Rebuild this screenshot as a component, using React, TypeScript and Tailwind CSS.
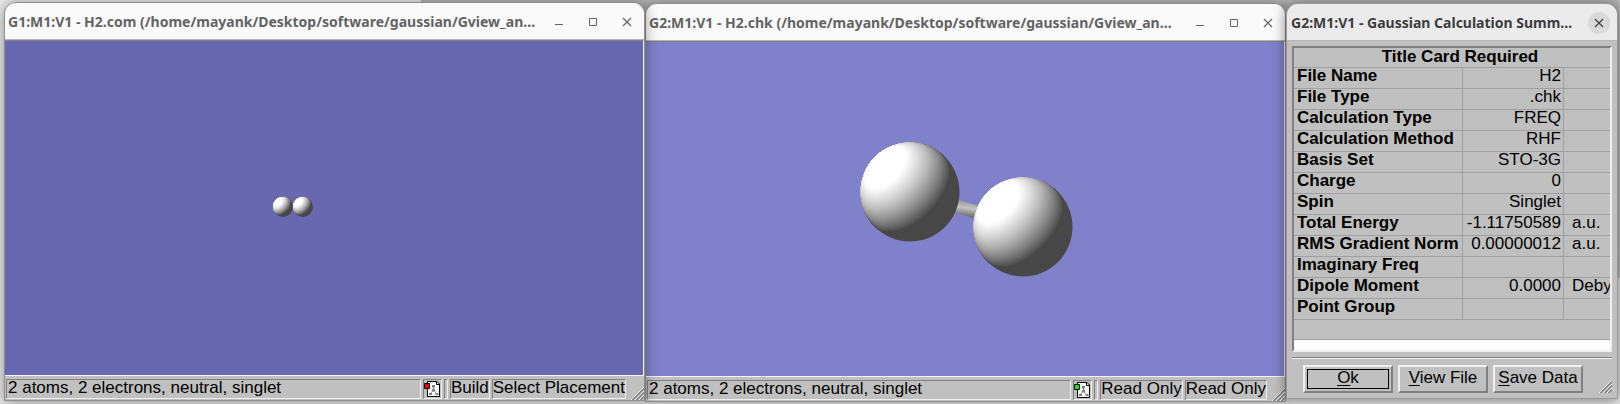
import type { ReactNode } from 'react'

const LIGHT = { z: 0.577, flat: 0.8165 }

function litRegion(c: number) {
  const s = Math.sqrt(1 - c * c)
  const rx = s * LIGHT.z
  const cx = c * LIGHT.flat
  const u = c / LIGHT.flat
  if (u >= 1) {
    return `M${cx - rx} 0A${rx} ${s} 0 1 1 ${cx + rx} 0A${rx} ${s} 0 1 1 ${cx - rx} 0Z`
  }
  const v = Math.sqrt(1 - u * u)
  const large = cx < u ? 1 : 0
  return `M${u} ${v}A1 1 0 0 0 ${u} ${-v}A${rx} ${s} 0 ${large} 0 ${u} ${v}Z`
}

const LEVELS = Array.from({ length: 70 }, (_, i) => {
  const c = i / 70
  const v = Math.min(255, Math.round(71 + 205 * c + 15 * Math.pow(c, 4)))
  return { d: litRegion(c), fill: `rgb(${v},${v},${v})` }
})

function Atom({ x, y, r }: { x: number; y: number; r: number }) {
  return (
    <g transform={`translate(${x} ${y}) rotate(-135) scale(${r})`}>
      <circle r={1} fill="#474747" />
      {LEVELS.map((l, i) => (
        <path key={i} d={l.d} fill={l.fill} />
      ))}
    </g>
  )
}

function CloseGlyph() {
  return (
    <svg viewBox="0 0 10 10" className="size-[10px]" fill="none" stroke="currentColor" strokeWidth="1.2">
      <path d="M1 1 9 9M9 1 1 9" />
    </svg>
  )
}

function TitleBar({ title }: { title: string }) {
  return (
    <header className="flex h-[37px] shrink-0 items-center border-b border-b-[#b4b4b4] bg-[#fafafa] pt-[2px] pl-[3px] text-[#636363]">
      <h2 className="min-w-0 flex-1 truncate font-['Noto_Sans',sans-serif] text-[14px] leading-6 font-bold">{title}</h2>
      <button aria-label="Minimize" className="flex h-6 w-[34px] shrink-0 items-center justify-center">
        <svg viewBox="0 0 10 10" className="size-[10px]" fill="currentColor">
          <path d="M1 7H9V8H1Z" />
        </svg>
      </button>
      <button aria-label="Maximize" className="flex h-6 w-[34px] shrink-0 items-center justify-center">
        <svg viewBox="0 0 10 10" className="size-[10px]" fill="none" stroke="currentColor">
          <path d="M1.5 1.5H8.5V8.5H1.5Z" />
        </svg>
      </button>
      <button aria-label="Close" className="flex h-6 w-[34px] shrink-0 items-center justify-center">
        <CloseGlyph />
      </button>
    </header>
  )
}

function Grip() {
  return (
    <svg viewBox="0 0 13 13" className="size-[13px] shrink-0" fill="none">
      <path d="M0 13 13 0M4 13 13 4M8 13 13 8" stroke="#f4f4f4" />
      <path d="M1.5 13 13 1.5M5.5 13 13 5.5M9.5 13 13 9.5" stroke="#7c7c7c" strokeWidth="1.4" />
    </svg>
  )
}

function Panel({ children, className = '' }: { children?: ReactNode; className?: string }) {
  return (
    <div
      className={`h-5 shrink-0 border border-t-[#808080] border-r-[#f0f0f0] border-b-[#f0f0f0] border-l-[#808080] whitespace-nowrap ${className}`}
    >
      {children}
    </div>
  )
}

function FileIcon({ color }: { color: string }) {
  return (
    <svg viewBox="0 0 17 18" className="h-[18px] w-[17px]" fill="none">
      <path d="M3.5 1.5H13L15.5 4V16.5H3.5Z" fill="#fff" stroke="#000" />
      <path d="M12.5 1.5V4.5H15.5" stroke="#000" />
      <path d="M9.5 6V10M9.5 10 6 14M9.5 10 13 14" stroke="#8c8c8c" />
      <path d="M8 5H11V7.5H8ZM8 9H11V11.5H8ZM5 13H8V15H5ZM11.5 13H14.5V15H11.5Z" fill="#808080" />
      <path d="M0.5 3.5H5.5V8.5H0.5Z" fill={color} stroke="#000" />
    </svg>
  )
}

function ViewWindow(props: {
  title: string
  modes: string[]
  iconColor: string
  className: string
  viewClass: string
  children: ReactNode
}) {
  return (
    <section
      className={`flex flex-col overflow-hidden rounded-t-xl border border-[#8e8e8e] bg-[#c0c0c0] shadow-[0_1px_14px_rgba(0,0,0,0.4)] ${props.className}`}
    >
      <TitleBar title={props.title} />
      <svg
        viewBox="0 0 638 334"
        role="img"
        aria-label="Hydrogen molecule"
        className={`block min-h-0 w-full flex-1 basis-0 border-t border-r border-t-[#808080] border-r-[#f0f0f0] ${props.viewClass}`}
      >
        {props.children}
      </svg>
      <footer className="flex h-[25px] shrink-0 items-end gap-[2px] border-t border-t-[#f4f4f4] pl-px text-[17px] leading-[15px]">
        <div className="flex min-w-0 flex-1 items-end gap-[2px] pb-px">
          <Panel className="min-w-0 flex-1 overflow-hidden pl-px">2 atoms, 2 electrons, neutral, singlet</Panel>
          <Panel className="w-[19px]">
            <FileIcon color={props.iconColor} />
          </Panel>
          <Panel className="w-1" />
          {props.modes.map((m, i) => (
            <Panel key={i}>{m}</Panel>
          ))}
        </div>
        <div className="pl-[3px]">
          <Grip />
        </div>
      </footer>
    </section>
  )
}

const ROWS = [
  ['File Name', 'H2', ''],
  ['File Type', '.chk', ''],
  ['Calculation Type', 'FREQ', ''],
  ['Calculation Method', 'RHF', ''],
  ['Basis Set', 'STO-3G', ''],
  ['Charge', '0', ''],
  ['Spin', 'Singlet', ''],
  ['Total Energy', '-1.11750589', 'a.u.'],
  ['RMS Gradient Norm', '0.00000012', 'a.u.'],
  ['Imaginary Freq', '', ''],
  ['Dipole Moment', '0.0000', 'Deby'],
  ['Point Group', '', ''],
]

function DialogButton({ hot, rest, focused = false }: { hot: string; rest: string; focused?: boolean }) {
  return (
    <button className="h-7 w-[90px] border-2 border-t-[#f0f0f0] border-r-[#808080] border-b-[#808080] border-l-[#f0f0f0] p-[2px] text-[17px] leading-[15px]">
      <span className={`block h-5 border whitespace-nowrap ${focused ? 'border-black' : 'border-transparent'}`}>
        <span className="underline decoration-1 underline-offset-2">{hot}</span>
        {rest}
      </span>
    </button>
  )
}

function SummaryWindow() {
  return (
    <section className="relative z-10 mt-[3px] mb-[5px] flex flex-col overflow-hidden rounded-t-xl border border-[#999] bg-[#c0c0c0] shadow-[0_1px_14px_rgba(0,0,0,0.5)]">
      <header className="flex h-[37px] shrink-0 items-center border-b border-b-[#b4b4b4] bg-[#ebebeb] pt-px pr-[7px] pl-1 text-[#3d3d3d]">
        <h2 className="min-w-0 flex-1 truncate font-['Noto_Sans',sans-serif] text-[14px] leading-6 font-bold">
          G2:M1:V1 - Gaussian Calculation Summ…
        </h2>
        <button aria-label="Close" className="flex size-[22px] shrink-0 items-center justify-center rounded-full bg-[#d9d9d9]">
          <CloseGlyph />
        </button>
      </header>
      <div className="flex min-h-0 flex-1 flex-col px-[5px] pt-[5px]">
        <div className="min-h-0 flex-1 overflow-hidden border-2 border-t-[#808080] border-r-[#f0f0f0] border-b-[#f0f0f0] border-l-[#808080] bg-white">
          <table className="w-full table-fixed border-separate border-spacing-0 bg-[#c0c0c0] text-[17px] leading-[15px]">
            <colgroup>
              <col className="w-[169px]" />
              <col className="w-[101px]" />
              <col />
            </colgroup>
            <thead>
              <tr>
                <th colSpan={3} className="h-5 border-b border-b-[#a0a0a4] p-0 pl-4 align-top leading-[17px]">
                  Title Card Required
                </th>
              </tr>
            </thead>
            <tbody>
              {ROWS.map(([k, v, unit]) => (
                <tr key={k}>
                  <th
                    scope="row"
                    className="h-[21px] border-r border-b border-[#a0a0a4] p-0 pl-[3px] text-left align-top whitespace-nowrap"
                  >
                    {k}
                  </th>
                  <td className="border-r border-b border-[#a0a0a4] p-0 pr-[2px] text-right align-top">{v}</td>
                  <td className="border-b border-[#a0a0a4] p-0 pl-2 align-top">{unit}</td>
                </tr>
              ))}
              <tr>
                <td colSpan={3} className="h-5 border-b border-[#a0a0a4] p-0" />
              </tr>
            </tbody>
          </table>
        </div>
        <hr className="mt-[5px] h-[2px] shrink-0 border-0 border-t border-b border-t-[#808080] border-b-[#f0f0f0]" />
        <div className="flex shrink-0 justify-between pt-[6px] pb-[5px] pl-[11px]">
          <div className="flex gap-[5px]">
            <DialogButton hot="O" rest="k" focused />
            <DialogButton hot="V" rest="iew File" />
            <DialogButton hot="S" rest="ave Data" />
          </div>
          <div className="flex items-end">
            <Grip />
          </div>
        </div>
      </div>
    </section>
  )
}

export default function App() {
  return (
    <main className="grid h-screen min-h-[404px] grid-cols-[641fr_641fr_332fr] bg-[#e9e9e9] bg-[linear-gradient(#b4b4b4,#b4b4b4)] bg-[length:74%_278px] bg-right-top bg-no-repeat pr-[2px] pl-1 font-['Liberation_Sans',Arial,sans-serif] text-black">
      <ViewWindow
        title="G1:M1:V1 - H2.com (/home/mayank/Desktop/software/gaussian/Gview_an…"
        modes={['Build', 'Select Placement']}
        iconColor="#f00000"
        className="relative z-10 mt-[2px] mb-[3px]"
        viewClass="bg-[#6868b0]"
      >
        <Atom x={278} y={166} r={10} />
        <Atom x={298} y={166} r={10} />
      </ViewWindow>
      <ViewWindow
        title="G2:M1:V1 - H2.chk (/home/mayank/Desktop/software/gaussian/Gview_an…"
        modes={['Read Only', 'Read Only']}
        iconColor="#00f000"
        className="mt-[3px] mb-[2px]"
        viewClass="bg-[#8080cb]"
      >
        <defs>
          <linearGradient id="bond" x1="0.6" y1="0" x2="0.4" y2="1">
            <stop offset="0" stopColor="#8a8a8a" />
            <stop offset="0.45" stopColor="#c4c4c4" />
            <stop offset="1" stopColor="#505050" />
          </linearGradient>
        </defs>
        <path d="M309 157 336 165 331 177 307 170Z" fill="url(#bond)" />
        <Atom x={264} y={150} r={49.5} />
        <Atom x={377} y={185} r={49.5} />
      </ViewWindow>
      <SummaryWindow />
    </main>
  )
}
